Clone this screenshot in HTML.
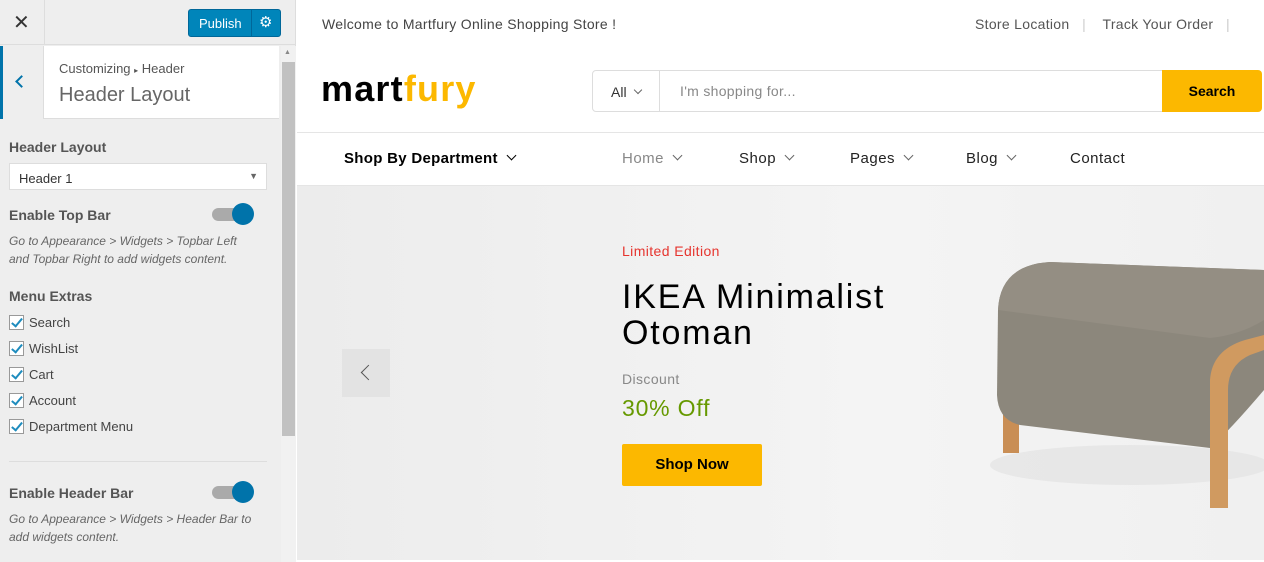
<!DOCTYPE html>
<html><head><meta charset="utf-8"><style>
*{box-sizing:border-box;margin:0;padding:0}
body{width:1264px;height:562px;overflow:hidden;font-family:"Liberation Sans",sans-serif;background:#fff;position:relative}
.sb{position:absolute;left:0;top:0;width:296px;height:562px;background:#eee;border-right:1px solid #ddd}
.abs{position:absolute}
.lbl{font-size:14px;font-weight:bold;color:#555;position:absolute;left:9px}
.it{font-size:12px;font-style:italic;color:#666;line-height:18px;position:absolute;left:9px}
.cb{position:absolute;left:9px;font-size:13px;color:#444;display:flex;align-items:center}
.cb i{display:inline-block;width:15px;height:15px;border:1px solid #999;background:#fff;margin-right:5px;position:relative}
.cb i:after{content:"";position:absolute;left:4px;top:0px;width:4px;height:9px;border:solid #1e8cbe;border-width:0 2px 2px 0;transform:rotate(40deg)}
.tg{position:absolute;left:212px;width:42px;height:22px}
.tg b{position:absolute;left:0;top:5px;width:36px;height:13px;border-radius:7px;background:#aaa}
.tg s{position:absolute;left:20px;top:0;width:22px;height:22px;border-radius:50%;background:#0073aa}
.nav{position:absolute;top:150px;font-size:15px;color:#222;letter-spacing:.5px}
.chev{display:inline-block;width:7px;height:7px;border:solid #666;border-width:0 1.3px 1.3px 0;transform:rotate(45deg);margin-left:10px;position:relative;top:-4px}
</style></head><body>
<div class="sb">
 <div class="abs" style="left:0;top:0;width:296px;height:45px;border-bottom:1px solid #ddd"></div>
 <div class="abs" style="left:44px;top:0;width:1px;height:45px;background:#ddd"></div>
 <div class="abs" style="left:13px;top:10px;font-size:20px;color:#333">✕</div>
 <div class="abs" style="left:188px;top:9px;width:93px;height:28px;background:#0085ba;border:1px solid #006799;border-radius:3px;color:#fff;font-size:13px"><span style="position:absolute;left:10px;top:6px">Publish</span><span style="position:absolute;left:62px;top:0;width:1px;height:26px;background:#006799"></span><span style="position:absolute;left:70px;top:3px;font-size:15px">⚙</span></div>
 <div class="abs" style="left:0;top:46px;width:279px;height:73px;background:#fff;border-bottom:1px solid #ddd"></div>
 <div class="abs" style="left:0;top:46px;width:44px;height:73px;background:#eee;border-left:3px solid #0073aa;border-right:1px solid #ddd"></div>
 <div class="abs" style="left:17px;top:77px;width:9px;height:9px;border:solid #0073aa;border-width:0 0 2px 2px;transform:rotate(45deg)"></div>
 <div class="abs" style="left:59px;top:61px;font-size:13px;color:#555">Customizing <span style="font-size:8px">▸</span> Header</div>
 <div class="abs" style="left:59px;top:84px;font-size:20px;color:#666">Header Layout</div>
 <div class="abs" style="left:281px;top:46px;width:15px;height:516px;background:#f1f1f1"></div>
 <div class="abs" style="left:282px;top:62px;width:13px;height:374px;background:#c1c1c1"></div>
 <div class="abs" style="left:284px;top:49px;font-size:7px;color:#888">▲</div>
 <div class="lbl" style="top:139px">Header Layout</div>
 <div class="abs" style="left:9px;top:163px;width:258px;height:27px;background:#fff;border:1px solid #ddd;font-size:13px;color:#333;padding:7px 0 0 9px">Header 1<span style="position:absolute;right:8px;top:7px;font-size:9px;color:#666">▼</span></div>
 <div class="lbl" style="top:207px">Enable Top Bar</div>
 <div class="tg" style="top:203px"><b></b><s></s></div>
 <div class="it" style="top:232px">Go to Appearance &gt; Widgets &gt; Topbar Left<br>and Topbar Right to add widgets content.</div>
 <div class="lbl" style="top:288px">Menu Extras</div>
 <div class="cb" style="top:315px"><i></i>Search</div>
 <div class="cb" style="top:341px"><i></i>WishList</div>
 <div class="cb" style="top:367px"><i></i>Cart</div>
 <div class="cb" style="top:393px"><i></i>Account</div>
 <div class="cb" style="top:419px"><i></i>Department Menu</div>
 <div class="abs" style="left:9px;top:461px;width:258px;height:1px;background:#ddd"></div>
 <div class="lbl" style="top:485px">Enable Header Bar</div>
 <div class="tg" style="top:481px"><b></b><s></s></div>
 <div class="it" style="top:510px">Go to Appearance &gt; Widgets &gt; Header Bar to<br>add widgets content.</div>
</div>
<div class="abs" style="left:322px;top:16px;font-size:14px;color:#444;letter-spacing:.3px">Welcome to Martfury Online Shopping Store !</div>
<div class="abs" style="left:975px;top:16px;font-size:14px;color:#555;letter-spacing:.3px">Store Location &nbsp;&nbsp;<span style="color:#ccc">|</span>&nbsp;&nbsp;&nbsp; Track Your Order &nbsp;&nbsp;<span style="color:#ccc">|</span></div>
<div class="abs" style="left:321px;top:68px;font-size:36px;font-weight:bold;color:#000;letter-spacing:1.2px">mart<span style="color:#fcb800">fury</span></div>
<div class="abs" style="left:592px;top:70px;width:572px;height:42px;border:1px solid #ddd;border-radius:4px 0 0 4px"></div>
<div class="abs" style="left:659px;top:70px;width:1px;height:42px;background:#ddd"></div>
<div class="abs" style="left:611px;top:84px;font-size:14px;color:#333">All<span class="chev" style="width:6px;height:6px;margin-left:8px"></span></div>
<div class="abs" style="left:680px;top:83px;font-size:14px;color:#888;letter-spacing:.3px">I'm shopping for...</div>
<div class="abs" style="left:1162px;top:70px;width:100px;height:42px;background:#fcb800;border-radius:0 4px 4px 0;font-size:14px;font-weight:bold;color:#000;text-align:center;line-height:42px">Search</div>
<div class="abs" style="left:297px;top:132px;width:967px;height:1px;background:#e5e5e5"></div>
<div class="abs" style="left:297px;top:185px;width:967px;height:1px;background:#e5e5e5"></div>
<div class="nav" style="left:344px;font-weight:bold;color:#000;letter-spacing:.3px">Shop By Department<span class="chev" style="border-color:#000"></span></div>
<div class="nav" style="left:622px;color:#888">Home<span class="chev"></span></div>
<div class="nav" style="left:739px">Shop<span class="chev"></span></div>
<div class="nav" style="left:850px">Pages<span class="chev"></span></div>
<div class="nav" style="left:966px">Blog<span class="chev"></span></div>
<div class="nav" style="left:1070px">Contact</div>
<div class="abs" style="left:297px;top:186px;width:967px;height:374px;background:linear-gradient(90deg,#ececec,#f4f4f4 60%,#f0f0f0)"></div>
<div class="abs" style="left:342px;top:349px;width:48px;height:48px;background:#e3e3e3"></div>
<div class="abs" style="left:363px;top:367px;width:11px;height:11px;border:solid #555;border-width:0 0 1.3px 1.3px;transform:rotate(45deg)"></div>
<div class="abs" style="left:622px;top:243px;font-size:14px;color:#e6352f;letter-spacing:.4px">Limited Edition</div>
<div class="abs" style="left:622px;top:279px;font-size:34px;color:#000;line-height:36px;letter-spacing:1.8px">IKEA Minimalist<br>Otoman</div>
<div class="abs" style="left:622px;top:371px;font-size:14px;color:#888;letter-spacing:.4px">Discount</div>
<div class="abs" style="left:622px;top:395px;font-size:23px;color:#669900;letter-spacing:.8px">30% Off</div>
<div class="abs" style="left:622px;top:444px;width:140px;height:42px;background:#fcb800;border-radius:2px;font-size:15px;font-weight:bold;text-align:center;line-height:42px">Shop Now</div>
<svg class="abs" style="left:960px;top:230px" width="304" height="300">
 <ellipse cx="170" cy="235" rx="140" ry="20" fill="#e2e2e2" opacity=".7"/>
 <rect x="43" y="175" width="16" height="48" fill="#c98e55"/>
 <path d="M38 80 Q40 35 90 32 L304 40 L304 160 Q270 200 250 218 L60 195 Q38 190 37 165 Z" fill="#8c877c"/>
 <path d="M38 80 Q40 35 90 32 L304 40 L304 90 Q280 105 250 108 Z" fill="#948e83"/>
 <path d="M250 278 L250 150 Q252 120 285 110 L304 105 L304 120 L290 125 Q268 135 268 160 L268 278 Z" fill="#d09a60"/>
</svg>
</body></html>
